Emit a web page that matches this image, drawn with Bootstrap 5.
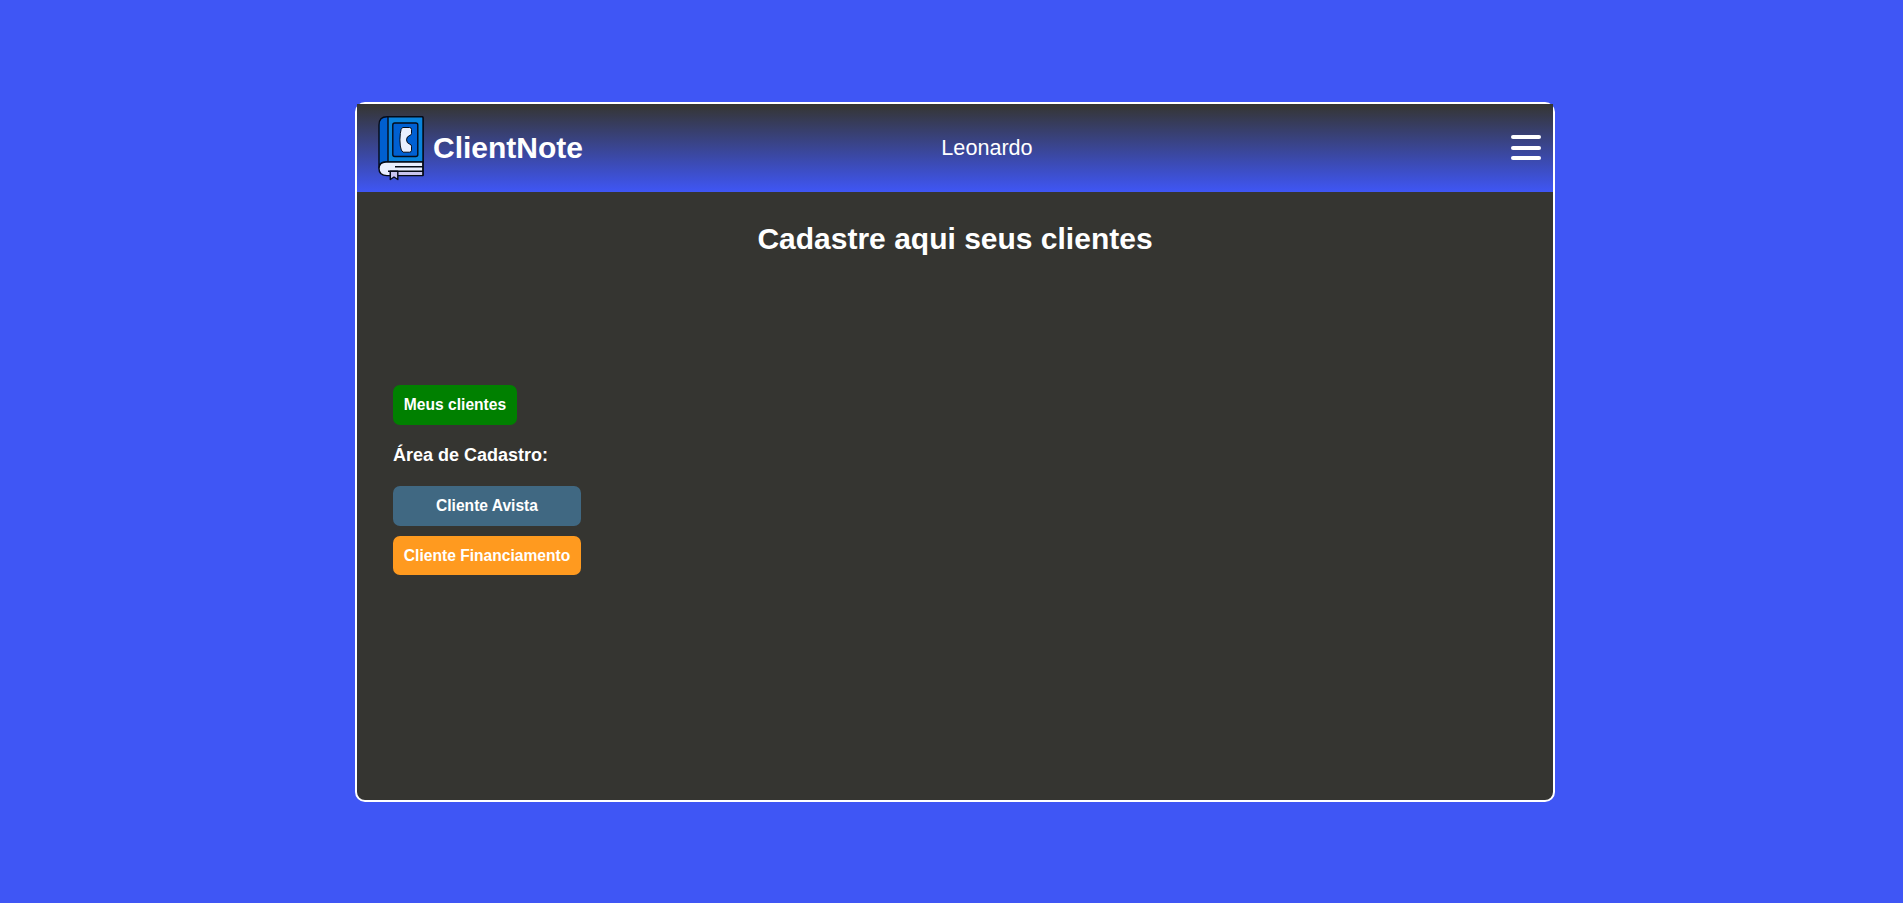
<!DOCTYPE html>
<html lang="pt-br">
<head>
<meta charset="utf-8">
<meta name="viewport" content="width=device-width, initial-scale=1">
<title>ClientNote</title>
<link href="https://cdn.jsdelivr.net/npm/bootstrap@5.3.0/dist/css/bootstrap.min.css" rel="stylesheet">
<style>
body{background:#3f56f5;font-family:"Liberation Sans",Arial,sans-serif;color:#fff;padding-left:7px}
.panel{width:1200px;height:700px;border:2px solid #fff;border-radius:10px;background:#353531}
.topbar{height:88px;background:linear-gradient(#353531,#3f56f5);padding:0 12px 0 20px}
.brand-name,.headline{font-size:30px;font-weight:700;line-height:34px}
.brand-name{margin-left:8px}
.user{font-size:21.6px;line-height:26px;margin-right:120px}
.burger{width:30px;height:25px}
.burger span{height:4px;border-radius:2px;background:#fff}
.headline{margin-top:30px}
.actions{margin:129px 0 0 36px;width:188px}
.action{--bs-btn-padding-x:0;--bs-btn-padding-y:0;--bs-btn-font-size:15.6px;--bs-btn-color:#fff;--bs-btn-hover-color:#fff;--bs-btn-border-width:0;--bs-btn-border-radius:7px;font-weight:700;height:40px;line-height:39px;white-space:nowrap}
.go-list{--bs-btn-bg:#008000;--bs-btn-hover-bg:#006d00;width:124px}
.go-cash{--bs-btn-bg:#406882;--bs-btn-hover-bg:#35586e;margin-bottom:10px}
.go-loan{--bs-btn-bg:#ff9a1f;--bs-btn-hover-bg:#e98709;height:39px}
.area{font-size:18px;font-weight:700;line-height:21px;margin:20px 0}
</style>
</head>
<body class="min-vh-100 d-flex align-items-center justify-content-center">
<main class="panel">
  <header class="topbar d-flex align-items-center justify-content-between">
    <div class="d-flex align-items-center">
      <svg width="48" height="68" viewBox="0 0 48 68" fill="none" stroke="#050b18" stroke-width="1.4" stroke-linejoin="round">
        <path d="M10 2.700H45Q46 2.700 46 4V48H9Q2 48 2 54V11Q2 2.700 10 2.700Z" fill="#005fd0"/>
        <path d="M11 2.700H45Q46 2.700 46 4V48H11Z" fill="#0a84dc"/>
        <rect x="15.800" y="9" width="25" height="33.500" rx="2" fill="#0060d2"/>
        <path d="M25.500 13.500H32.500Q34.500 13.500 34.500 15.500V19.500Q34.500 21 33 21.300Q29.500 22.500 29.500 25.800Q29.500 29.200 33 30.300Q34.500 30.700 34.500 32.200V36.200Q34.500 38.200 32.500 38.200H26Q24 37 23.300 32Q22.500 26 23.300 19.500Q23.800 14.500 25.500 13.500Z" fill="#e9efff" stroke-width="1"/>
        <path d="M46 48H9Q2 48 2 54.800Q2 61.600 10 61.600H46Z" fill="#e9efff"/>
        <path d="M12 58H45.300V60.900H12Z" fill="#c8c5ef" stroke="none"/>
        <path d="M18 52.800H46M11 57.300H46M46 48V61.600"/>
        <path d="M13.300 57.300V65.500L17 63L20.800 65.500V57.300Z" fill="#c8c5ef"/>
      </svg>
      <span class="brand-name">ClientNote</span>
    </div>
    <span class="user">Leonardo</span>
    <div class="burger d-flex flex-column justify-content-between" role="button" aria-label="Menu"><span></span><span></span><span></span></div>
  </header>
  <h1 class="headline text-center mb-0">Cadastre aqui seus clientes</h1>
  <section class="actions d-flex flex-column">
    <button class="btn action go-list">Meus clientes</button>
    <h2 class="area">Área de Cadastro:</h2>
    <button class="btn action go-cash">Cliente Avista</button>
    <button class="btn action go-loan">Cliente Financiamento</button>
  </section>
</main>
<script src="https://cdn.jsdelivr.net/npm/bootstrap@5.3.0/dist/js/bootstrap.bundle.min.js"></script>
</body>
</html>
